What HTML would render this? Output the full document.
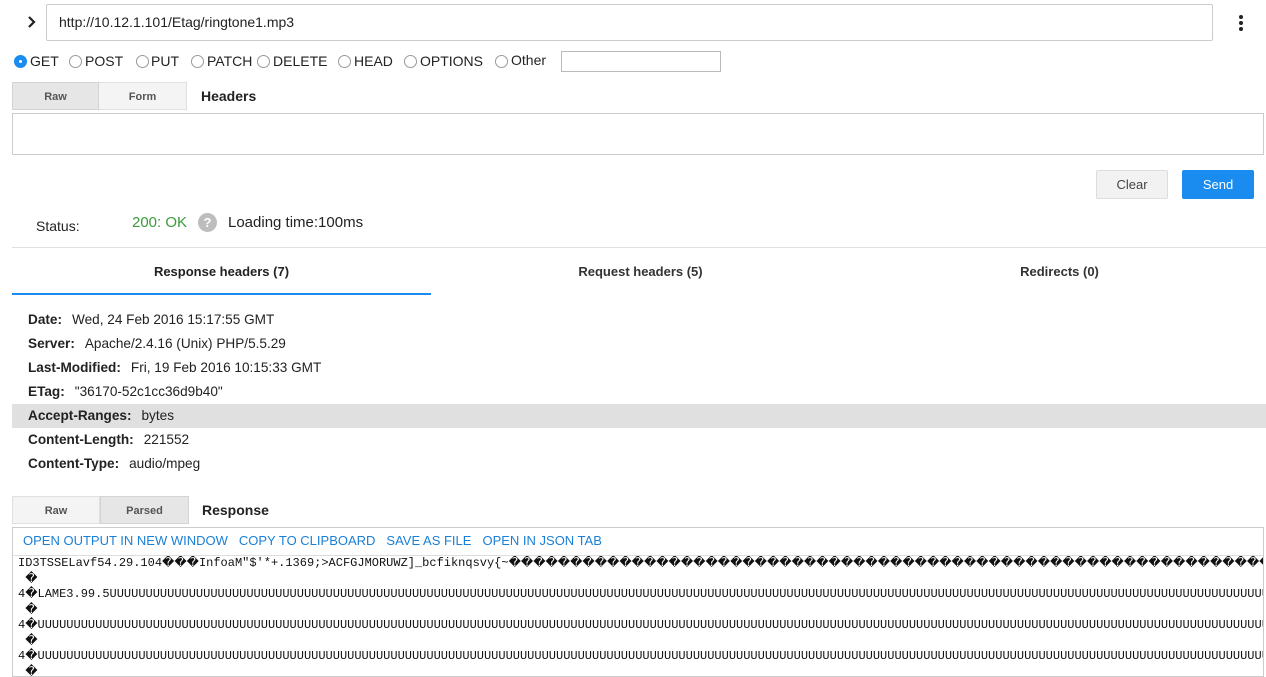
<!DOCTYPE html>
<html><head><meta charset="utf-8"><style>
*{box-sizing:border-box;margin:0;padding:0}
body{width:1266px;height:666px;overflow:hidden;background:#fff;font-family:"Liberation Sans",sans-serif;color:#222;position:relative}
.a{position:absolute;white-space:nowrap}
.radio{position:absolute;top:55px;width:13px;height:13px;border:1px solid #999;border-radius:50%;background:#fff}
.rl{position:absolute;top:53px;font-size:14px;color:#222}
.tab{position:absolute;font-size:11px;font-weight:bold;color:#555;text-align:center;line-height:28px}
.hk{font-weight:bold;color:#222}
.hr{position:absolute;left:12px;width:1254px;height:24px;line-height:24px;font-size:13.6px;padding-left:16px}
.hr span.v{margin-left:10px}
.lnk{color:#1a7fd6;margin-right:11px}
pre{font-family:"Liberation Mono",monospace;font-size:12px;line-height:15.5px;color:#111;white-space:pre;overflow:hidden}
</style></head><body>
<svg class="a" style="left:27px;top:15px" width="10" height="14" viewBox="0 0 10 14"><path d="M2 2 L7 7 L2 12" stroke="#222" stroke-width="2.2" fill="none"/></svg>
<div class="a" style="left:46px;top:4px;width:1167px;height:37px;border:1px solid #ccc;border-radius:2px;font-size:14px;line-height:35px;padding-left:12px">http://10.12.1.101/Etag/ringtone1.mp3</div>
<div class="a" style="left:1239px;top:15px;width:4px;height:4px;border-radius:50%;background:#222"></div>
<div class="a" style="left:1239px;top:21px;width:4px;height:4px;border-radius:50%;background:#222"></div>
<div class="a" style="left:1239px;top:27px;width:4px;height:4px;border-radius:50%;background:#222"></div>

<div class="radio" style="left:14px;background:#1a8cf0;border-color:#1a8cf0"><div style="position:absolute;left:4px;top:4px;width:3px;height:3px;background:#fff;border-radius:50%"></div></div>
<div class="rl" style="left:30px">GET</div>
<div class="radio" style="left:69px"></div><div class="rl" style="left:85px">POST</div>
<div class="radio" style="left:136px"></div><div class="rl" style="left:151px">PUT</div>
<div class="radio" style="left:191px"></div><div class="rl" style="left:207px">PATCH</div>
<div class="radio" style="left:257px"></div><div class="rl" style="left:273px">DELETE</div>
<div class="radio" style="left:338px"></div><div class="rl" style="left:354px">HEAD</div>
<div class="radio" style="left:404px"></div><div class="rl" style="left:420px">OPTIONS</div>
<div class="radio" style="left:495px"></div><div class="rl" style="left:511px;top:52px">Other</div>
<div class="a" style="left:561px;top:51px;width:160px;height:21px;border:1px solid #bbb"></div>

<div class="tab" style="left:12px;top:82px;width:87px;height:28px;background:#e6e6e6;border:1px solid #d4d4d4">Raw</div>
<div class="tab" style="left:99px;top:82px;width:88px;height:28px;background:#f4f4f4;border:1px solid #e0e0e0;border-left:none">Form</div>
<div class="a" style="left:201px;top:88px;font-size:14px;font-weight:bold">Headers</div>
<div class="a" style="left:12px;top:113px;width:1252px;height:42px;border:1px solid #ccc"></div>

<div class="a" style="left:1096px;top:170px;width:72px;height:29px;background:#f2f2f2;border:1px solid #ddd;border-radius:2px;font-size:13px;color:#444;text-align:center;line-height:27px">Clear</div>
<div class="a" style="left:1182px;top:170px;width:72px;height:29px;background:#1a8cf0;border-radius:2px;font-size:13px;color:#fff;text-align:center;line-height:29px">Send</div>

<div class="a" style="left:36px;top:218px;font-size:14px">Status:</div>
<div class="a" style="left:132px;top:214px;font-size:15px;color:#3b9a3b">200: OK</div>
<div class="a" style="left:198px;top:213px;width:19px;height:19px;border-radius:50%;background:#bdbdbd;color:#fff;font-size:13px;font-weight:bold;text-align:center;line-height:19px">?</div>
<div class="a" style="left:228px;top:214px;font-size:15px">Loading time:100ms</div>
<div class="a" style="left:12px;top:247px;width:1254px;height:1px;background:#e0e0e0"></div>

<div class="a" style="left:12px;top:264px;width:419px;text-align:center;font-size:13px;font-weight:bold">Response headers (7)</div>
<div class="a" style="left:431px;top:264px;width:419px;text-align:center;font-size:13px;font-weight:bold;color:#333">Request headers (5)</div>
<div class="a" style="left:850px;top:264px;width:419px;text-align:center;font-size:13px;font-weight:bold;color:#333">Redirects (0)</div>
<div class="a" style="left:12px;top:293px;width:419px;height:2px;background:#1a8cf0"></div>

<div class="hr" style="top:308px"><span class="hk">Date:</span><span class="v">Wed, 24 Feb 2016 15:17:55 GMT</span></div>
<div class="hr" style="top:332px"><span class="hk">Server:</span><span class="v">Apache/2.4.16 (Unix) PHP/5.5.29</span></div>
<div class="hr" style="top:356px"><span class="hk">Last-Modified:</span><span class="v">Fri, 19 Feb 2016 10:15:33 GMT</span></div>
<div class="hr" style="top:380px"><span class="hk">ETag:</span><span class="v">"36170-52c1cc36d9b40"</span></div>
<div class="hr" style="top:404px;background:#e0e0e0"><span class="hk">Accept-Ranges:</span><span class="v">bytes</span></div>
<div class="hr" style="top:428px"><span class="hk">Content-Length:</span><span class="v">221552</span></div>
<div class="hr" style="top:452px"><span class="hk">Content-Type:</span><span class="v">audio/mpeg</span></div>

<div class="tab" style="left:12px;top:496px;width:88px;height:28px;background:#f4f4f4;border:1px solid #e0e0e0">Raw</div>
<div class="tab" style="left:100px;top:496px;width:89px;height:28px;background:#e6e6e6;border:1px solid #d4d4d4">Parsed</div>
<div class="a" style="left:202px;top:502px;font-size:14px;font-weight:bold">Response</div>

<div class="a" style="left:12px;top:527px;width:1252px;height:150px;border:1px solid #ccc;overflow:hidden">
<div style="height:28px;line-height:26px;border-bottom:1px solid #ddd;padding-left:10px;font-size:13px"><span class="lnk">OPEN OUTPUT IN NEW WINDOW</span><span class="lnk">COPY TO CLIPBOARD</span><span class="lnk">SAVE AS FILE</span><span class="lnk">OPEN IN JSON TAB</span></div>
<pre style="padding:0 0 0 5px;margin-top:0">ID3TSSELavf54.29.104���InfoaM"$'*+.1369;>ACFGJMORUWZ]_bcfiknqsvy{~�������������������������������������������������������������������������
 �
4�LAME3.99.5UUUUUUUUUUUUUUUUUUUUUUUUUUUUUUUUUUUUUUUUUUUUUUUUUUUUUUUUUUUUUUUUUUUUUUUUUUUUUUUUUUUUUUUUUUUUUUUUUUUUUUUUUUUUUUUUUUUUUUUUUUUUUUUUUUUUUUUUUUUUUUUUUUUUUUUUUUUUUUUUUUUUUUUUUUUUUUUUUUUUUUUUUUUU
 �
4�UUUUUUUUUUUUUUUUUUUUUUUUUUUUUUUUUUUUUUUUUUUUUUUUUUUUUUUUUUUUUUUUUUUUUUUUUUUUUUUUUUUUUUUUUUUUUUUUUUUUUUUUUUUUUUUUUUUUUUUUUUUUUUUUUUUUUUUUUUUUUUUUUUUUUUUUUUUUUUUUUUUUUUUUUUUUUUUUUUUUUUUUUUUUUUUUUUUUUUUU
 �
4�UUUUUUUUUUUUUUUUUUUUUUUUUUUUUUUUUUUUUUUUUUUUUUUUUUUUUUUUUUUUUUUUUUUUUUUUUUUUUUUUUUUUUUUUUUUUUUUUUUUUUUUUUUUUUUUUUUUUUUUUUUUUUUUUUUUUUUUUUUUUUUUUUUUUUUUUUUUUUUUUUUUUUUUUUUUUUUUUUUUUUUUUUUUUUUUUUUUUUUUU
 �</pre>
</div>
</body></html>
